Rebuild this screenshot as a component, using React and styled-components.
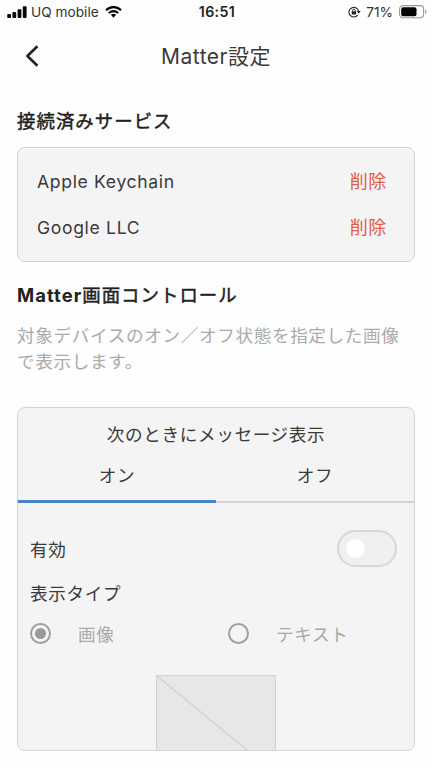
import React from "react";
import styled, { createGlobalStyle } from "styled-components";

const GlobalStyle = createGlobalStyle`
  * { box-sizing: border-box; }
  body {
    margin: 0;
    background: #fefefe;
    color: #3a3a3a;
    font-family: Inter, "Noto Sans CJK JP", sans-serif;
  }
  h1, h2, p { margin: 0; font-weight: inherit; }
  button { font: inherit; color: inherit; border: 0; padding: 0; background: none; letter-spacing: inherit; }
`;

const Screen = styled.main`
  height: 768px;
  overflow: hidden;
  font-size: 17.6px;
  font-weight: 400;
  letter-spacing: 0.65px;
`;

const StatusBar = styled.header`
  display: grid;
  grid-template-columns: 1fr auto 1fr;
  align-items: center;
  height: 24px;
  padding: 0 5px 0 7px;
  font-size: 13.7px;
  line-height: 24px;
  letter-spacing: 0;
  color: #333;
`;

const StatusGroup = styled.div`
  display: flex;
  align-items: center;
  justify-content: ${(p) => (p.$end ? "flex-end" : "flex-start")};
  white-space: nowrap;
  svg { flex: none; }
`;

const Carrier = styled.span`
  margin: 0 6px 0 4px;
`;

const Percent = styled.span`
  margin: 0 6px 0 5px;
`;

const Clock = styled.time`
  font-size: 14.2px;
  font-weight: 600;
  color: #222;
  letter-spacing: 0.4px;
`;

const NavBar = styled.nav`
  display: grid;
  grid-template-columns: 60px 1fr 60px;
  align-items: center;
  height: 64px;
`;

const BackButton = styled.button`
  display: flex;
  padding-left: 25px;
`;

const Title = styled.h1`
  padding-top: 1px;
  font-size: 21px;
  line-height: 30px;
  letter-spacing: 0.5px;
  text-align: center;
`;

const Content = styled.div`
  padding: 0 17px;
`;

const Heading = styled.h2`
  font-size: 18.4px;
  font-weight: 400;
  line-height: 28px;
  letter-spacing: 1.05px;
  color: #222;
  -webkit-text-stroke: 0.45px #222;
  padding-top: ${(p) => p.$top}px;
`;

const Strong = styled.span`
  font-weight: 650;
  -webkit-text-stroke: 0;
`;

const Card = styled.section`
  width: 398px;
  border: 1.5px solid #d1d3d3;
  border-radius: 8px;
  background: #f4f4f4;
  overflow: hidden;
`;

const ServiceCard = styled(Card)`
  height: 115px;
  margin-top: 12px;
  padding: 10px 27px 0 19px;
`;

const ServiceRow = styled.div`
  display: flex;
  align-items: center;
  justify-content: space-between;
  height: 46px;
`;

const DeleteButton = styled.button`
  padding-bottom: 2px;
  color: #e05c48;
  font-size: 18px;
`;

const Description = styled.p`
  margin-top: 14px;
  line-height: 26px;
  color: #aaa;
  white-space: nowrap;
`;

const MessageCard = styled(Card)`
  height: 344px;
  margin-top: 32px;
`;

const CardTitle = styled.p`
  padding-top: 13px;
  line-height: 28px;
  text-align: center;
`;

const Tabs = styled.div`
  display: grid;
  grid-template-columns: 1fr 1fr;
  height: 54px;
`;

const Tab = styled.button`
  position: relative;
  padding-bottom: 2px;
  border-bottom: 2px solid #d1d4d4;
  &::after {
    content: "";
    display: ${(p) => (p.$active ? "block" : "none")};
    position: absolute;
    inset: auto 0 -2px 0;
    height: 3px;
    background: #4884c6;
  }
`;

const SettingRow = styled.div`
  display: flex;
  align-items: center;
  justify-content: space-between;
  height: 36px;
  margin-top: 27px;
  padding: 0 17px 0 12px;
`;

const Toggle = styled.span`
  display: flex;
  align-items: center;
  width: 60px;
  height: 37px;
  padding-left: 7px;
  border: 2px solid #d7d7d7;
  border-radius: 19px;
  background: #f0f0f0;
  &::before {
    content: "";
    width: 19px;
    height: 19px;
    border-radius: 50%;
    background: #fff;
  }
`;

const FieldLabel = styled.p`
  padding: 14px 12px 0;
  line-height: 28px;
`;

const RadioGroup = styled.div`
  display: grid;
  grid-template-columns: 1fr 1fr;
  height: 54px;
  padding-top: 11px;
  color: #a9a9a9;
`;

const RadioOption = styled.label`
  display: flex;
  align-items: center;
  gap: 27px;
  height: 28px;
  padding-left: 12px;
`;

const RadioMark = styled.span`
  display: grid;
  place-items: center;
  width: 21px;
  height: 21px;
  border: 2.5px solid #a0a0a0;
  border-radius: 50%;
  &::before {
    content: "";
    width: 11px;
    height: 11px;
    border-radius: 50%;
    background: ${(p) => (p.$checked ? "#999" : "transparent")};
  }
`;

const Preview = styled.div`
  width: 120px;
  height: 100px;
  margin: 13px auto 0;
  border: 1.5px solid #d1d1d1;
  background: #e8e6e7;
  svg { display: block; }
`;

const services = ["Apple Keychain", "Google LLC"];

function SignalIcon() {
  return (
    <svg width="20" height="12" viewBox="0 0 20 12" fill="#080808">
      <rect x="0.2" y="8" width="3.8" height="4" rx="1" />
      <rect x="5.4" y="6" width="3.8" height="6" rx="1" />
      <rect x="10.6" y="3.3" width="3.8" height="8.7" rx="1" />
      <rect x="15.8" y="0.2" width="3.8" height="11.8" rx="1" />
    </svg>
  );
}

function WifiIcon() {
  return (
    <svg width="17" height="12" viewBox="0 0 17 12" fill="none" stroke="#080808">
      <path d="M1 4.2Q8.5-2.1 16 4.2" strokeWidth="2.3" />
      <path d="M3.7 7Q8.5 3.1 13.3 7" strokeWidth="2.1" />
      <path d="M5.9 8.8Q8.5 6.9 11.1 8.8L8.5 11.7Z" fill="#080808" stroke="none" />
    </svg>
  );
}

function RotationLockIcon() {
  return (
    <svg width="13" height="12" viewBox="0 0 13 12" fill="none" stroke="#222" strokeWidth="1.1">
      <path d="M9.7 9.2A4.9 4.9 0 1 1 10.7 5.5" />
      <path d="M8.7 5H12.7L10.7 7.8Z" fill="#222" stroke="none" />
      <rect x="3.7" y="5.2" width="4.4" height="3.4" rx=".5" fill="#222" stroke="none" />
      <path d="M4.6 5.5V4.4a1.3 1.3 0 0 1 2.6 0V5.5" strokeWidth=".9" />
    </svg>
  );
}

function BatteryIcon() {
  return (
    <svg width="28" height="14" viewBox="0 0 28 14">
      <rect x="0.6" y="0.6" width="24" height="12.2" rx="3.5" fill="none" stroke="#999" strokeWidth="1.1" />
      <rect x="2.2" y="2.2" width="15.3" height="9" rx="2" fill="#050505" />
      <path d="M26 4.5Q27.6 5 27.6 6.7T26 9Z" fill="#aaa" />
    </svg>
  );
}

export default function App() {
  return (
    <Screen>
      <GlobalStyle />
      <StatusBar>
        <StatusGroup>
          <SignalIcon />
          <Carrier>UQ mobile</Carrier>
          <WifiIcon />
        </StatusGroup>
        <Clock>16:51</Clock>
        <StatusGroup $end>
          <RotationLockIcon />
          <Percent>71%</Percent>
          <BatteryIcon />
        </StatusGroup>
      </StatusBar>
      <NavBar>
        <BackButton aria-label="戻る">
          <svg width="14" height="22" viewBox="0 0 14 22" fill="none" stroke="#222" strokeWidth="2.6">
            <path d="M12.4 1.3L2.4 11L12.4 20.7" strokeLinejoin="round" />
          </svg>
        </BackButton>
        <Title>Matter設定</Title>
      </NavBar>
      <Content>
        <Heading $top={19}>接続済みサービス</Heading>
        <ServiceCard>
          {services.map((name) => (
            <ServiceRow key={name}>
              <span>{name}</span>
              <DeleteButton>削除</DeleteButton>
            </ServiceRow>
          ))}
        </ServiceCard>
        <Heading $top={19}><Strong>Matter</Strong>画面コントロール</Heading>
        <Description>
          対象デバイスのオン／オフ状態を指定した画像
          <br />
          で表示します。
        </Description>
        <MessageCard>
          <CardTitle>次のときにメッセージ表示</CardTitle>
          <Tabs>
            <Tab $active>オン</Tab>
            <Tab>オフ</Tab>
          </Tabs>
          <SettingRow>
            <span>有効</span>
            <Toggle role="switch" aria-checked="false" />
          </SettingRow>
          <FieldLabel>表示タイプ</FieldLabel>
          <RadioGroup>
            <RadioOption><RadioMark $checked />画像</RadioOption>
            <RadioOption><RadioMark />テキスト</RadioOption>
          </RadioGroup>
          <Preview>
            <svg width="118" height="97" viewBox="0 0 118 97" fill="none" stroke="#d5d3d4" strokeWidth="1.5">
              <path d="M0 0L118 97" />
            </svg>
          </Preview>
        </MessageCard>
      </Content>
    </Screen>
  );
}
